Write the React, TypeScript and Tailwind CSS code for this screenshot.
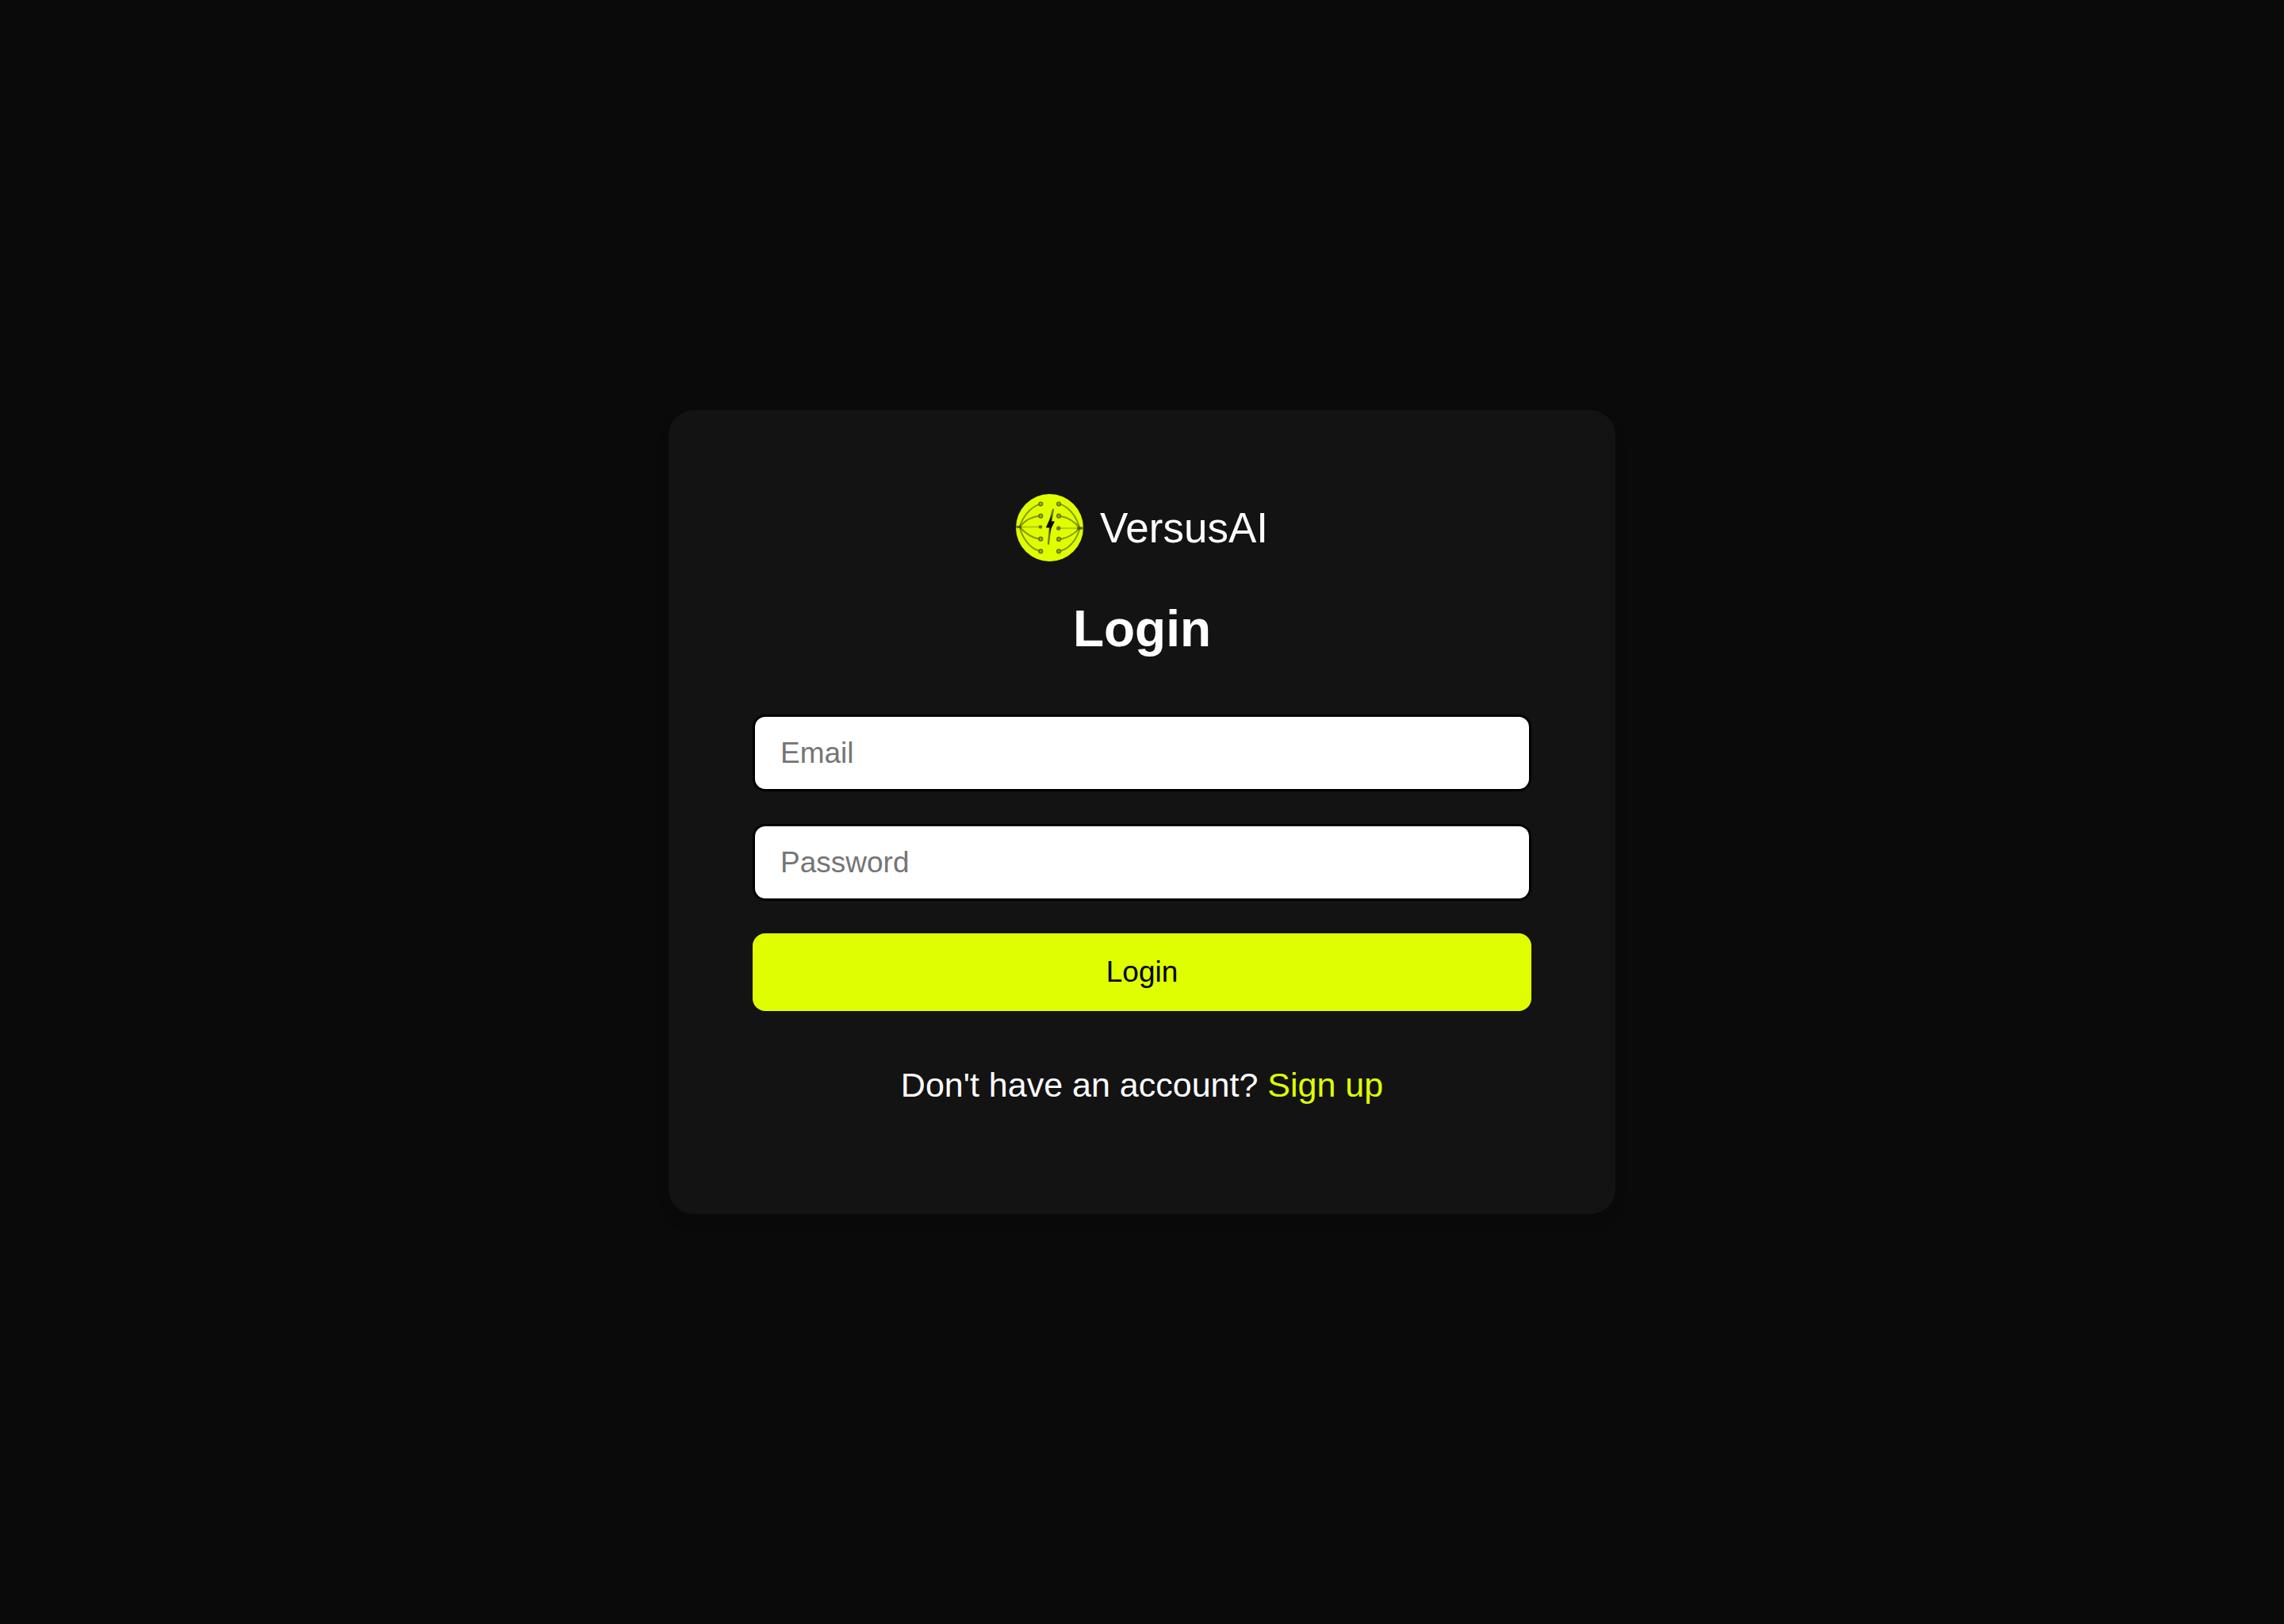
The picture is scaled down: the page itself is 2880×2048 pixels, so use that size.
import React from "react";

const DARK = "#4a5500";

function Logo() {
  return (
    <svg viewBox="28 26 258 258" className="size-[85px] shrink-0" aria-hidden="true">
      <circle cx="157" cy="155" r="129" fill="#dfff00" />
      <g fill="none" stroke={DARK} strokeOpacity="0.6" strokeWidth="6" strokeLinecap="round">
        <path d="M42 152C55 112 82 78 118 65" />
        <path d="M42 152C62 128 85 112 118 110" />
        <path d="M42 152C62 174 84 194 118 198" />
        <path d="M42 152C52 192 80 234 118 244" />
        <path d="M272 157C262 116 235 78 198 65" />
        <path d="M272 157C252 130 230 116 198 111" />
        <path d="M272 157C252 178 230 194 198 199" />
        <path d="M272 157C262 198 235 234 198 244" />
      </g>
      <g fill="none" stroke={DARK} strokeOpacity="0.3" strokeWidth="6">
        <path d="M42 152H120" />
        <path d="M194 157H272" />
      </g>
      <g stroke={DARK} strokeOpacity="0.75" strokeWidth="5" fill="#a3bb00">
        <circle cx="123" cy="64" r="7" />
        <circle cx="123" cy="110" r="7" />
        <circle cx="123" cy="198" r="7" />
        <circle cx="123" cy="245" r="7" />
        <circle cx="192" cy="64" r="7" />
        <circle cx="192" cy="110" r="7" />
        <circle cx="192" cy="199" r="7" />
        <circle cx="192" cy="245" r="7" />
      </g>
      <g fill={DARK} fillOpacity="0.8">
        <circle cx="122" cy="152" r="7" />
        <circle cx="191" cy="157" r="8" />
        <path d="M29 147L50 149V156L29 157Z" />
        <path d="M285 151L262 153V162L285 162Z" />
      </g>
      <path d="M168 82L174 84L166 131H176L163 158L155 220L149 219L155 155H143L154 131Z" fill="#6b7a00" />
      <path d="M167 104L163 131H176L163 158L158 180L157 154H143L154 130Z" fill="#0a0c00" />
    </svg>
  );
}

const fieldClass =
  "block h-[97px] w-full rounded-[16px] border-3 border-black bg-white px-8 text-[37px] text-black placeholder:text-[#757575] outline-none";

export default function App() {
  return (
    <main className="flex min-h-screen items-center justify-center bg-[#0a0a0a] font-['Liberation_Sans',Arial,sans-serif] text-white">
      <section className="w-full max-w-[1194px] rounded-[32px] bg-[#131313] px-[106px] pt-[106px] pb-[138px] shadow-[0_11px_16px_rgba(0,0,0,0.1)]">
        <div className="flex items-center justify-center gap-[21px]">
          <Logo />
          <span className="text-[53px] leading-[60px]">VersusAI</span>
        </div>
        <h1 className="mt-12 text-center text-[64px] leading-[74px] font-bold">Login</h1>
        <form className="mt-[71px] flex flex-col gap-[41px]" onSubmit={(e) => e.preventDefault()}>
          <input type="email" aria-label="Email" placeholder="Email" className={fieldClass} />
          <input type="password" aria-label="Password" placeholder="Password" className={fieldClass} />
          <button type="submit" className="h-[98px] w-full rounded-[16px] bg-[#dfff00] text-[37px] text-black">
            Login
          </button>
        </form>
        <p className="mt-[68px] text-center text-[43px] leading-[50px]">
          Don't have an account?{" "}
          <a href="#signup" className="text-[#dfff00]">
            Sign up
          </a>
        </p>
      </section>
    </main>
  );
}
